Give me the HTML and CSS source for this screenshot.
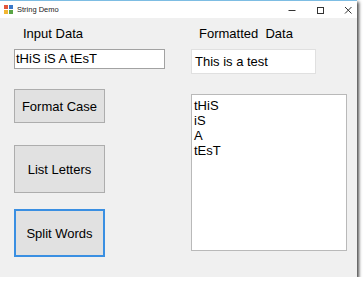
FILE: index.html
```html
<!DOCTYPE html>
<html lang="en">
<head>
    <meta charset="UTF-8">
    <meta name="viewport" content="width=device-width, initial-scale=1.0">
    <title>String Demo</title>
    <link rel="stylesheet" href="styles.css">
</head>
<body>
    <div class="window">
        <div class="titlebar">
            <svg class="app-icon" width="9" height="9" viewBox="0 0 9 9">
                <rect x="0" y="0" width="4" height="4" fill="#e2553a"/>
                <rect x="5" y="0" width="4" height="4" fill="#3a78c9"/>
                <rect x="0" y="5" width="4" height="4" fill="#f2b632"/>
                <rect x="5" y="5" width="4" height="4" fill="#5aa545"/>
            </svg>
            <span class="title">String Demo</span>
            <div class="controls">
                <svg width="8" height="8" viewBox="0 0 8 8"><path d="M0.5 4.5h7" stroke="#333" stroke-width="1"/></svg>
                <svg width="8" height="8" viewBox="0 0 8 8"><rect x="1.5" y="1.5" width="6" height="6" fill="none" stroke="#333" stroke-width="1"/></svg>
                <svg width="8" height="8" viewBox="0 0 8 8"><path d="M1 1l6.5 6.5M7.5 1L1 7.5" stroke="#333" stroke-width="1"/></svg>
            </div>
        </div>

        <div class="client">
            <div class="col left">
                <label class="caption" for="input">Input Data</label>
                <div class="textbox" id="input">tHiS iS A tEsT</div>
                <button class="btn short">Format Case</button>
                <button class="btn tall">List Letters</button>
                <button class="btn tall focused">Split Words</button>
            </div>
            <div class="col right">
                <div class="caption">Formatted&nbsp; Data</div>
                <div class="output">This is a test</div>
                <div class="listbox">
                    <div>tHiS</div>
                    <div>iS</div>
                    <div>A</div>
                    <div>tEsT</div>
                </div>
            </div>
        </div>
    </div>
</body>
</html>
```

FILE: styles.css
```css
body { margin: 0; background: #fff; font-family: "Liberation Sans", Arial, sans-serif; }
.window { width: 357px; height: 277px; background: #f0f0f0; border-top: 1px solid #7dbde3; box-sizing: border-box; box-shadow: 2px 2px 3px rgba(0,0,0,0.7); display: flex; flex-direction: column; }
.titlebar { height: 17px; background: #fff; display: flex; align-items: center; padding-left: 4px; }
.app-icon { display: block; }
.title { font-size: 7.5px; color: #222; margin-left: 4px; }
.controls { margin-left: auto; display: flex; gap: 20px; padding-right: 5px; align-items: center; }
.controls svg { display: block; }

.client { display: flex; padding: 8px 0 0 14px; gap: 26px; }
.col { display: flex; flex-direction: column; align-items: flex-start; }
.left { width: 151px; }
.caption { font-size: 13px; line-height: 16px; color: #000; margin-left: 9px; }
.right .caption { margin-left: 8px; }

.textbox { margin-top: 7px; width: 151px; height: 20px; box-sizing: border-box; border: 1px solid #a2a2a2; background: #fff; font-size: 13px; line-height: 18px; padding-left: 1px; }
.btn { width: 91px; box-sizing: border-box; background: #e1e1e1; border: 1px solid #adadad; font-family: inherit; font-size: 13px; color: #000; padding: 0; }
.short { height: 34px; margin-top: 20px; }
.tall { height: 48px; margin-top: 22px; }
.focused { margin-top: 16px; border: 2px solid #3a8fe2; }

.output { margin-top: 7px; width: 125px; height: 25px; box-sizing: border-box; border: 1px solid #e0e0e0; background: #fff; font-size: 13px; line-height: 15px; padding: 4px 3px; }
.listbox { margin-top: 20px; width: 156px; height: 157px; box-sizing: border-box; border: 1px solid #b9b9b9; background: #fff; font-size: 13px; line-height: 15px; padding: 3px 2px; }
```
